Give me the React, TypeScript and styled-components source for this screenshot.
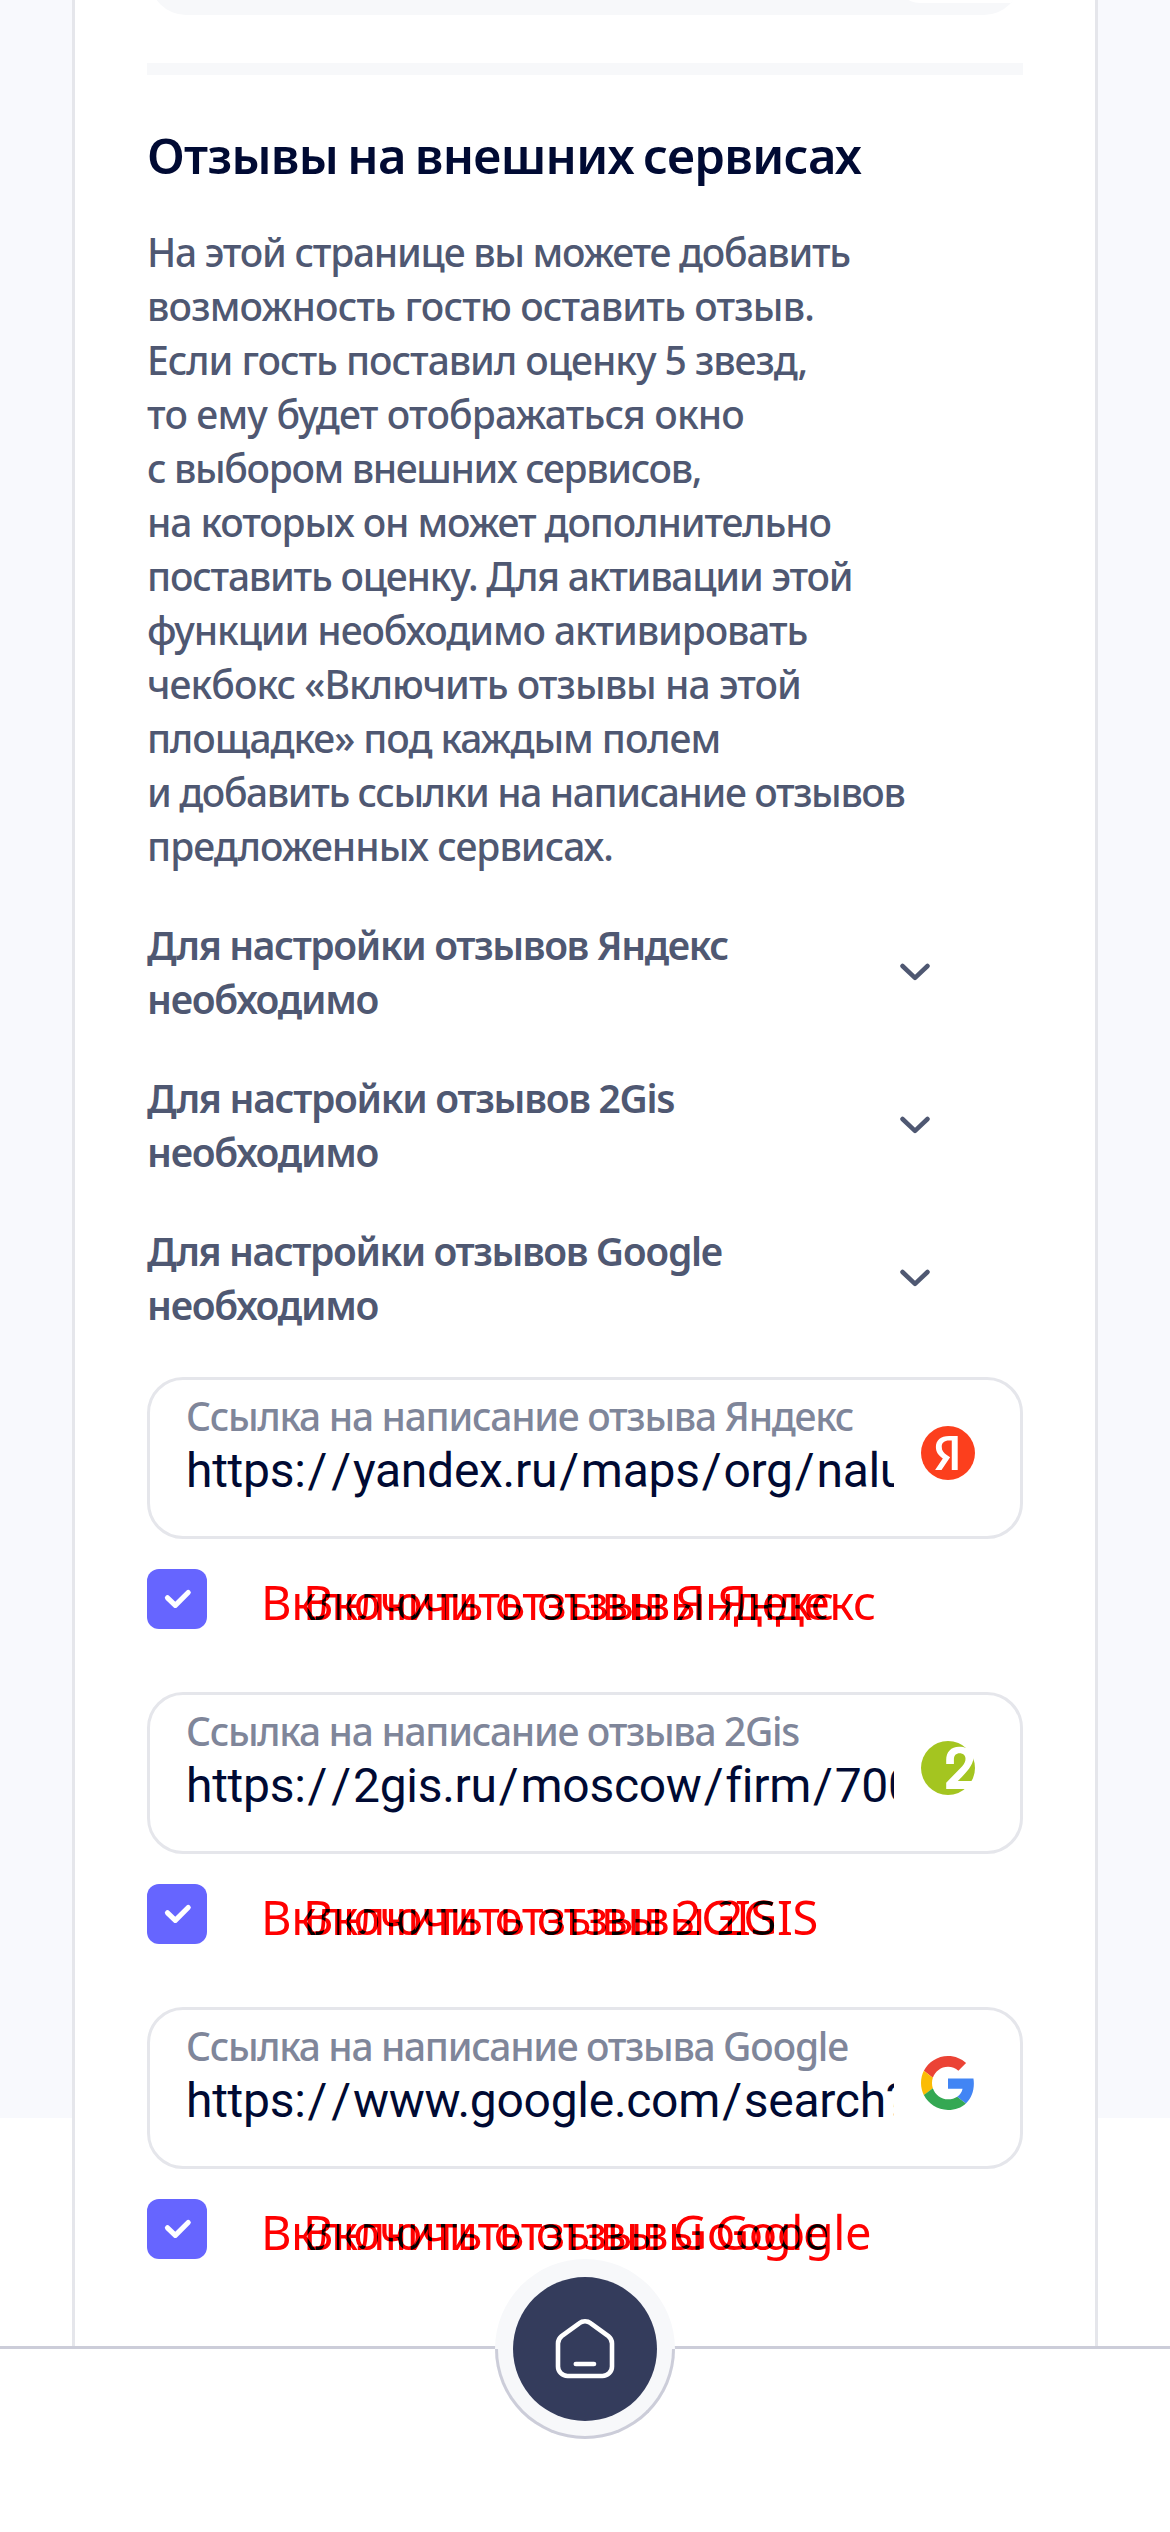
import React, { useState } from 'react';
import styled, { createGlobalStyle } from 'styled-components';

const GlobalStyle = createGlobalStyle`
  *, *::before, *::after { box-sizing: border-box; }
  body {
    margin: 0;
    background: #fff;
    font-family: "Noto Sans", "Open Sans", sans-serif;
  }
`;

const Page = styled.div`
  position: relative;
  width: 1170px;
  height: 2532px;
  overflow: hidden;
  padding: 0 72px;
  background: linear-gradient(#f8f9fd, #f8f9fd) 0 0 / 100% 2118px no-repeat #fff;
`;

const Card = styled.main`
  display: flex;
  flex-direction: column;
  height: 2346px;
  padding: 0 72px;
  border: solid #e5e6eb;
  border-width: 0 3px;
  background: #fff;
`;

const PanelClip = styled.div`
  display: flex;
  flex-direction: column;
  justify-content: flex-end;
  flex: none;
  height: 15px;
  overflow: hidden;
`;

const PanelBody = styled.div`
  display: flex;
  justify-content: flex-end;
  align-items: flex-end;
  flex: none;
  height: 90px;
  margin: 0 3px;
  padding-bottom: 12px;
  overflow: hidden;
  background: #f7f8fa;
  border-radius: 0 0 36px 36px;
`;

const PanelButton = styled.div`
  width: 124px;
  height: 66px;
  border-radius: 33px 0 0 24px;
  background: #fff;
`;

const Divider = styled.div`
  flex: none;
  height: 12px;
  margin-top: 48px;
  background: #f7f8fa;
`;

const Title = styled.h1`
  margin: 50px 0 40px;
  font-size: 49px;
  font-weight: 600;
  line-height: 60px;
  letter-spacing: -0.69px;
  word-spacing: -3px;
  color: #000a33;
  white-space: nowrap;
`;

const Description = styled.p`
  margin: 0;
  font-size: 39px;
  font-weight: 500;
  line-height: 54px;
  color: #4f5872;
`;

const Line = styled.span<{ $spacing: number }>`
  display: block;
  white-space: nowrap;
  letter-spacing: ${(p) => p.$spacing}px;
`;

const Guides = styled.section`
  display: flex;
  flex-direction: column;
  gap: 45px;
  margin: 45px 0;
`;

const GuideRow = styled.button`
  display: flex;
  align-items: center;
  justify-content: space-between;
  padding: 0 93px 0 0;
  border: 0;
  background: none;
  font: 600 39px/54px "Noto Sans", "Open Sans", sans-serif;
  text-align: left;
  color: #4f5872;
`;

const Services = styled.section`
  display: flex;
  flex-direction: column;
  gap: 63px;
`;

const Service = styled.div`
  display: flex;
  flex-direction: column;
  gap: 30px;
`;

const Field = styled.div`
  display: flex;
  align-items: flex-start;
  height: 162px;
  padding: 9px 45px 0 36px;
  border: 3px solid #e5e6eb;
  border-radius: 36px;
  background: #fff;
`;

const FieldText = styled.label`
  display: flex;
  flex-direction: column;
  width: 708px;
  margin-right: 27px;
  overflow: hidden;
`;

const FieldLabel = styled.span<{ $spacing: number }>`
  font-size: 39px;
  font-weight: 500;
  line-height: 54px;
  letter-spacing: ${(p) => p.$spacing}px;
  white-space: nowrap;
  color: #7f869a;
`;

const FieldValue = styled.span`
  font-family: Roboto, sans-serif;
  font-size: 48px;
  line-height: 56px;
  letter-spacing: -0.28px;
  white-space: nowrap;
  color: #000a33;
`;

const Slash = styled.span`
  margin: 0 2.1px;
`;

const Logo = styled.svg`
  flex: none;
  width: 54px;
  height: 54px;
  margin-top: 37px;
`;

const Toggle = styled.div`
  display: flex;
  align-items: center;
  height: 60px;
`;

const Checkbox = styled.button`
  display: flex;
  flex: none;
  width: 60px;
  height: 60px;
  padding: 0;
  border: 0;
  border-radius: 12px;
  background: #6665ff;
`;

const OverlapLabel = styled.div`
  display: grid;
  isolation: isolate;
  margin-left: 54px;
  padding-top: 6px;
`;

const LabelLayer = styled.span<{ $shift: number; $spacing: number }>`
  grid-area: 1 / 1;
  margin-left: ${(p) => p.$shift}px;
  font-size: 47px;
  line-height: 60px;
  letter-spacing: ${(p) => p.$spacing}px;
  white-space: nowrap;
  color: #f00;
  mix-blend-mode: difference;
`;

const BottomBar = styled.nav`
  position: absolute;
  left: 0;
  right: 0;
  bottom: 0;
  display: flex;
  justify-content: center;
  height: 186px;
  border-top: 3px solid #cccdd9;
  background: #fff;
`;

const HomeRing = styled.div`
  position: relative;
  display: flex;
  align-items: center;
  justify-content: center;
  width: 180px;
  height: 180px;
  margin-top: -90px;
  border-radius: 50%;
  background: #f7f8fa;

  &::after {
    content: "";
    position: absolute;
    left: 0;
    right: 0;
    bottom: 0;
    height: 90px;
    border: 3px solid #cccdd9;
    border-top: 0;
    border-radius: 0 0 90px 90px;
    pointer-events: none;
  }
`;

const HomeButton = styled.button`
  display: flex;
  align-items: center;
  justify-content: center;
  width: 144px;
  height: 144px;
  padding: 0;
  border: 0;
  border-radius: 50%;
  background: #343c5c;
`;

const description: [string, number][] = [
  ['На этой странице вы можете добавить', -1.25],
  ['возможность гостю оставить отзыв.', -0.83],
  ['Если гость поставил оценку 5 звезд,', -1.03],
  ['то ему будет отображаться окно', -0.82],
  ['с выбором внешних сервисов,', -1.35],
  ['на которых он может дополнительно', -1.11],
  ['поставить оценку. Для активации этой', -1.22],
  ['функции необходимо активировать', -1.11],
  ['чекбокс «Включить отзывы на этой', -0.94],
  ['площадке» под каждым полем', -1.05],
  ['и добавить ссылки на написание отзывов', -1.4],
  ['предложенных сервисах.', -0.98],
];

const guides: [string, number][] = [
  ['Для настройки отзывов Яндекс', -1.39],
  ['Для настройки отзывов 2Gis', -1.31],
  ['Для настройки отзывов Google', -1.43],
];

const YandexLogo = () => (
  <Logo viewBox="2.56 2.56 18.88 18.88">
    <circle cx="12" cy="12" r="9.44" fill="#fc3f1d" />
    <path
      fill="#fff"
      d="M13.32 7.666h-.924c-1.694 0-2.585.858-2.585 2.123 0 1.43.616 2.1 1.881 2.959l1.045.704-3.003 4.487H7.49l2.695-4.014c-1.55-1.111-2.42-2.19-2.42-4.015 0-2.288 1.595-3.85 4.62-3.85h3.003v11.868H13.32V7.666z"
    />
  </Logo>
);

const GisLogo = () => (
  <Logo viewBox="0 0 54 54">
    <circle cx="27" cy="27" r="27" fill="#a4c520" />
    <path
      fill="#fff"
      d="M25.2 23V19C25.2 11 30 5.7 38 5.7c3 0 5.5.5 7 1.3L56 2v14l-3.4 1C51.5 25 46 31 36.8 40H56v8H25.2v-6.3L41 25.5c2.5-2.7 3.5-5 3.5-7.7 0-3.3-2.5-5.5-5.8-5.5-3.7 0-5.8 2.2-5.8 6.2V23z"
    />
  </Logo>
);

const GoogleLogo = () => (
  <Logo viewBox="0 0 48 48">
    <path fill="#eb4335" d="M24 9.5c3.54 0 6.71 1.22 9.21 3.6l6.85-6.85C35.9 2.38 30.47 0 24 0 14.62 0 6.51 5.38 2.56 13.22l7.98 6.19C12.43 13.72 17.74 9.5 24 9.5z" />
    <path fill="#4285f4" d="M46.98 24.55c0-1.57-.15-3.09-.38-4.55H24v9.02h12.94c-.58 2.96-2.26 5.48-4.78 7.18l7.73 6c4.51-4.18 7.09-10.36 7.09-17.65z" />
    <path fill="#fbbc05" d="M10.53 28.59c-.48-1.45-.76-2.99-.76-4.59s.27-3.14.76-4.59l-7.98-6.19C.92 16.46 0 20.12 0 24c0 3.88.92 7.54 2.56 10.78l7.97-6.19z" />
    <path fill="#34a853" d="M24 48c6.48 0 11.93-2.13 15.89-5.81l-7.73-6c-2.15 1.45-4.92 2.3-8.16 2.3-6.26 0-11.57-4.22-13.47-9.91l-7.98 6.19C6.51 42.62 14.62 48 24 48z" />
  </Logo>
);

const services = [
  {
    label: 'Ссылка на написание отзыва Яндекс',
    labelSpacing: -1.29,
    url: 'https://yandex.ru/maps/org/nalu',
    toggle: 'Включить отзывы Яндекс',
    toggleSpacing: -0.3,
    logo: <YandexLogo />,
  },
  {
    label: 'Ссылка на написание отзыва 2Gis',
    labelSpacing: -1.31,
    url: 'https://2gis.ru/moscow/firm/700',
    toggle: 'Включить отзывы 2GIS',
    toggleSpacing: -0.34,
    logo: <GisLogo />,
  },
  {
    label: 'Ссылка на написание отзыва Google',
    labelSpacing: -1.35,
    url: 'https://www.google.com/search?',
    toggle: 'Включить отзывы Google',
    toggleSpacing: -0.44,
    logo: <GoogleLogo />,
  },
];

const Url = ({ value }: { value: string }) => (
  <FieldValue>
    {value.split('/').map((part, index) => (
      <React.Fragment key={index}>
        {index > 0 && <Slash>/</Slash>}
        {part}
      </React.Fragment>
    ))}
  </FieldValue>
);

const ReviewService = ({ service }: { service: (typeof services)[number] }) => {
  const [checked, setChecked] = useState(true);
  return (
    <Service>
      <Field>
        <FieldText>
          <FieldLabel $spacing={service.labelSpacing}>{service.label}</FieldLabel>
          <Url value={service.url} />
        </FieldText>
        {service.logo}
      </Field>
      <Toggle>
        <Checkbox type="button" role="checkbox" aria-checked={checked} onClick={() => setChecked(!checked)}>
          {checked && (
            <svg width="60" height="60" viewBox="0 0 60 60" fill="none">
              <path d="M20.5 28.8L28.3 36.3L41.2 23.5" stroke="#fff" strokeWidth="5.2" strokeLinecap="round" strokeLinejoin="round" />
            </svg>
          )}
        </Checkbox>
        <OverlapLabel>
          <LabelLayer $shift={0} $spacing={service.toggleSpacing}>{service.toggle}</LabelLayer>
          <LabelLayer $shift={42} $spacing={service.toggleSpacing} aria-hidden>{service.toggle}</LabelLayer>
        </OverlapLabel>
      </Toggle>
    </Service>
  );
};

export default function App() {
  return (
    <>
      <GlobalStyle />
      <Page>
        <Card>
          <PanelClip>
            <PanelBody>
              <PanelButton />
            </PanelBody>
          </PanelClip>
          <Divider />
          <Title>Отзывы на внешних сервисах</Title>
          <Description>
            {description.map(([text, spacing]) => (
              <Line key={text} $spacing={spacing}>{text}</Line>
            ))}
          </Description>
          <Guides>
            {guides.map(([text, spacing]) => (
              <GuideRow key={text} type="button">
                <span>
                  <Line $spacing={spacing}>{text}</Line>
                  <Line $spacing={-1.28}>необходимо</Line>
                </span>
                <svg width="30" height="18" viewBox="0 0 30 18" fill="none">
                  <path d="M2.5 3L15 14.9L27.5 3" stroke="#4f5872" strokeWidth="4.5" strokeLinecap="round" strokeLinejoin="round" />
                </svg>
              </GuideRow>
            ))}
          </Guides>
          <Services>
            {services.map((service) => (
              <ReviewService key={service.url} service={service} />
            ))}
          </Services>
        </Card>
        <BottomBar>
          <HomeRing>
            <HomeButton type="button" aria-label="Главная">
              <svg width="72" height="72" viewBox="0 0 72 72" fill="none" stroke="#fff" strokeWidth="4.6" strokeLinecap="round" strokeLinejoin="round">
                <path d="M9 30.5V53.5a9.5 9.5 0 0 0 9.5 9.5h35a9.5 9.5 0 0 0 9.5-9.5V30.5a9.5 9.5 0 0 0-3.6-7.4L41.8 10.3a9.5 9.5 0 0 0-11.6 0L12.6 23.1A9.5 9.5 0 0 0 9 30.5z" />
                <path d="M26.8 51H45" />
              </svg>
            </HomeButton>
          </HomeRing>
        </BottomBar>
      </Page>
    </>
  );
}
